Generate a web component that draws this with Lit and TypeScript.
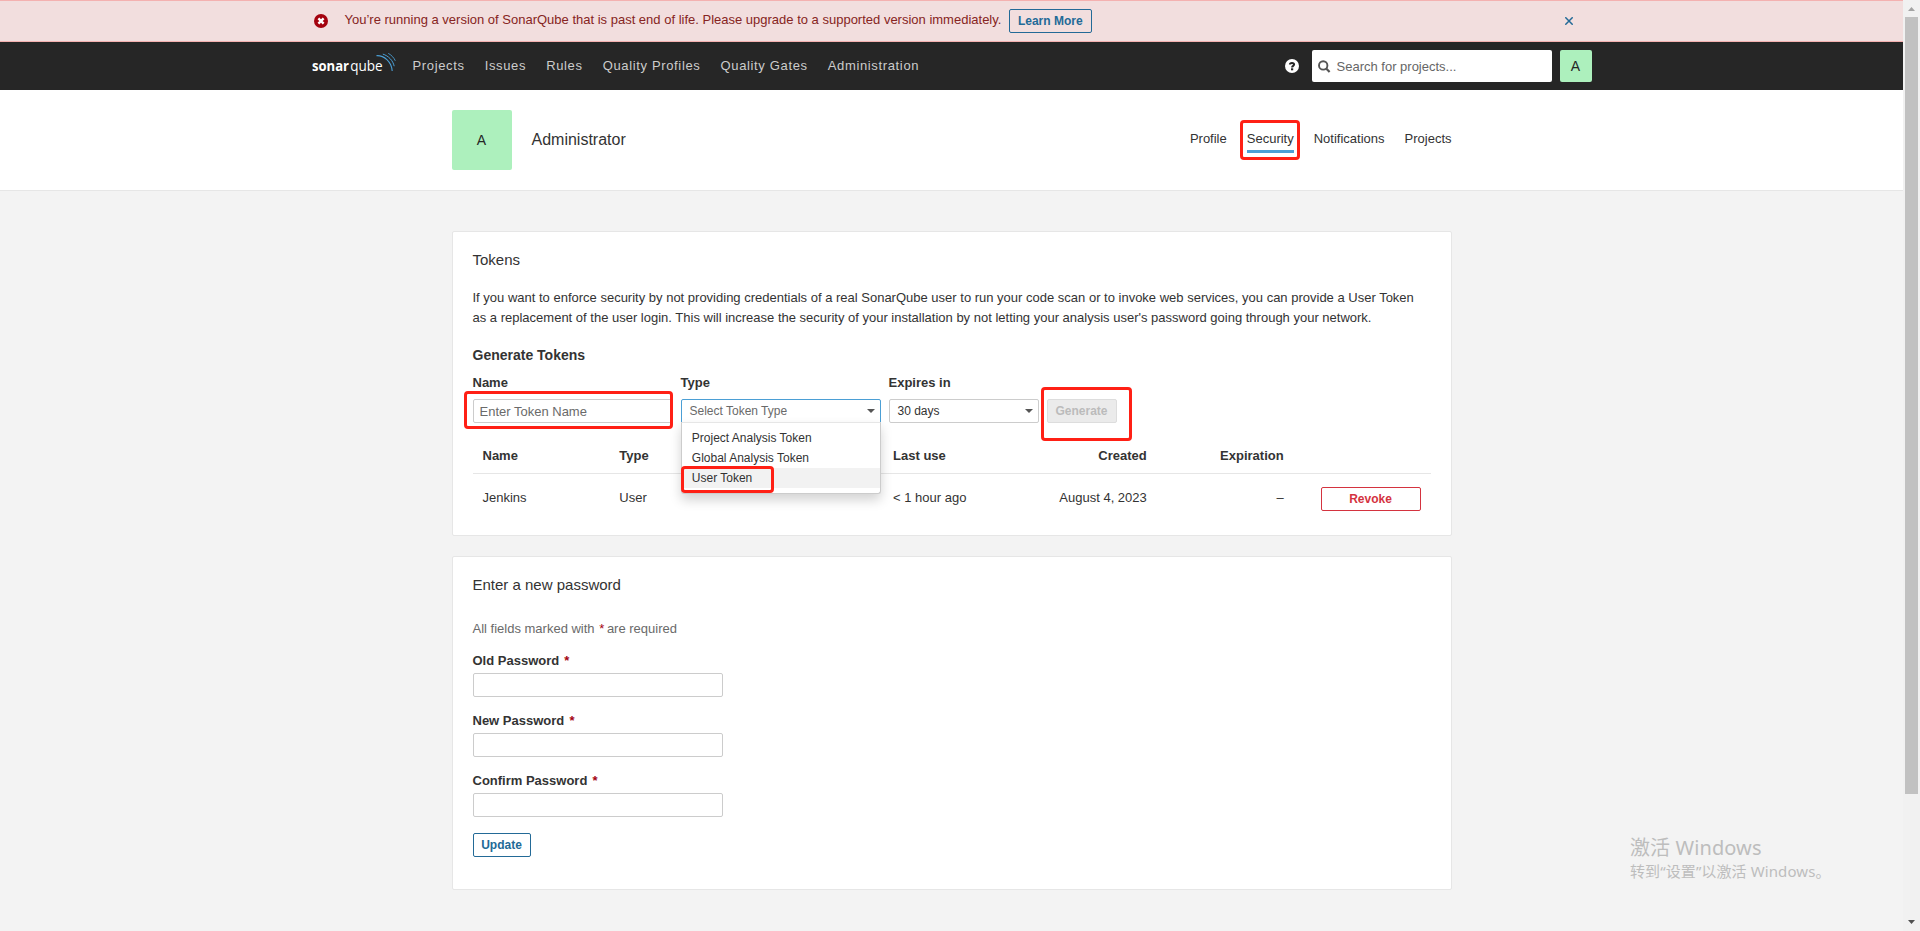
import { LitElement, html, css } from "lit";
import { customElement } from "lit/decorators.js";

@customElement("sq-banner")
export class SqBanner extends LitElement {
  static styles = css`
    :host { display: block; height: 40px; background: #f2dede; border: 1px solid #f4b1b0; border-width: 1px 0; color: #862422; }
    .inner { display: flex; width: 1280px; margin: 0 auto; height: 40px; }
    .icon { margin: 13px 0 0 2.5px; width: 14px; height: 14px; }
    .msg { margin-left: 16.5px; line-height: 38px; }
    .btn { margin: 8px 0 0 7.5px; height: 22px; line-height: 22px; padding: 0 8px; border: 1px solid #236a97; border-radius: 2px; color: #236a97; font-size: 12px; font-weight: 700; }
    .close { margin: 16px 18.5px 0 auto; width: 8px; height: 8px; }
    svg { display: block; }
  `;
  render() {
    return html`<div class="inner">
      <svg class="icon" viewBox="0 0 14 14"><circle cx="7" cy="7" r="7" fill="#a4030f" /><path d="M4.4 4.4l5.2 5.2M9.6 4.4l-5.2 5.2" stroke="#fff" stroke-width="2.4" /></svg>
      <span class="msg">You’re running a version of SonarQube that is past end of life. Please upgrade to a supported version immediately.</span>
      <span class="btn">Learn More</span>
      <svg class="close" viewBox="0 0 8 8"><path d="M.3 .3l7.4 7.4M7.7 .3l-7.4 7.4" stroke="#236a97" stroke-width="1.5" /></svg>
    </div>`;
  }
}

@customElement("sq-navbar")
export class SqNavbar extends LitElement {
  static styles = css`
    :host { display: block; height: 48px; background: #262626; }
    .inner { display: flex; width: 1280px; height: 48px; margin: 0 auto; }
    .logo { width: 84px; height: 24px; margin: 10px 17px 0 0; }
    .menu { display: flex; gap: 20px; line-height: 48px; color: #ccc; letter-spacing: 0.65px; }
    .help { width: 14px; height: 14px; margin: 17px 13px 0 auto; }
    .search { display: flex; box-sizing: border-box; width: 240px; height: 32px; margin: 8px 8px 0 0; padding-left: 6px; background: #fff; border-radius: 2px; color: #666; line-height: 34px; }
    .lens { width: 13px; height: 13px; margin: 10px 6px 0 0; }
    .avatar { width: 32px; height: 32px; margin-top: 8px; border-radius: 2px; background: #adf0bd; color: #262626; font-size: 14px; line-height: 32px; text-align: center; }
    .word { font: 400 15px "Open Sans", sans-serif; fill: #fff; }
    .bold { font-weight: 700; }
    svg { display: block; }
  `;
  render() {
    return html`<div class="inner">
      <svg class="logo" viewBox="0 0 84 24">
        <text class="word bold" x="0" y="19" textLength="37" lengthAdjust="spacingAndGlyphs">sonar</text>
        <text class="word" x="38.2" y="19" textLength="32.5" lengthAdjust="spacingAndGlyphs">qube</text>
        <g fill="none" stroke="#4b9fd5" stroke-width="1.1">
          <path d="M64.5 3.6C72 3.2 79.5 9.5 80.2 19" />
          <path d="M70.8 2.1C76.5 3.8 81 8.6 82.2 14.2" stroke-width="1" />
          <path d="M76.3 1.4C79.4 3 82 5.8 83.3 8.8" stroke-width=".9" />
        </g>
      </svg>
      <nav class="menu">${["Projects", "Issues", "Rules", "Quality Profiles", "Quality Gates", "Administration"].map((t) => html`<span>${t}</span>`)}</nav>
      <svg class="help" viewBox="0 0 14 14"><circle cx="7" cy="7" r="7" fill="#fff" /><path d="M4.9 5.6C4.9 3.3 9.1 3.3 9.1 5.6C9.1 6.9 7.1 6.9 7.1 8.4" fill="none" stroke="#262626" stroke-width="2" /><rect x="6" y="9.3" width="2.2" height="2" fill="#262626" /></svg>
      <div class="search">
        <svg class="lens" viewBox="0 0 13 13"><circle cx="5.2" cy="5.4" r="4.2" fill="none" stroke="#555" stroke-width="1.9" /><path d="M8.2 8.4L11.6 11.9" stroke="#555" stroke-width="2.2" /></svg>
        <span>Search for projects...</span>
      </div>
      <div class="avatar">A</div>
    </div>`;
  }
}

@customElement("sq-account-header")
export class SqAccountHeader extends LitElement {
  static styles = css`
    :host { display: block; height: 100px; background: #fff; border-bottom: 1px solid #e6e6e6; }
    .inner { display: flex; width: 1000px; height: 100px; margin: 0 auto; }
    .avatar { width: 60px; height: 60px; margin-top: 20px; border-radius: 2px; background: #adf0bd; color: #262626; font-size: 14px; line-height: 60px; text-align: center; }
    .name { margin: 41px 0 0 20px; font-size: 16px; line-height: 18px; }
    .tabs { display: flex; gap: 20px; margin: 39px 0 0 auto; line-height: 20px; }
    .tab { height: 21px; position: relative; }
    .active { border-bottom: 3px solid #4b9fd5; }
    .mark { position: absolute; left: -7px; top: -9px; width: 54px; height: 34px; border: 3px solid #ff2015; border-radius: 4px; }
  `;
  render() {
    return html`<div class="inner">
      <div class="avatar">A</div>
      <div class="name">Administrator</div>
      <nav class="tabs">
        <span class="tab">Profile</span>
        <span class="tab active">Security<i class="mark"></i></span>
        <span class="tab">Notifications</span>
        <span class="tab">Projects</span>
      </nav>
    </div>`;
  }
}

const caret = html`<svg class="caret" viewBox="0 0 8 4"><path d="M0 0h8L4 4z" fill="#555" /></svg>`;

@customElement("sq-tokens")
export class SqTokens extends LitElement {
  static styles = css`
    :host { display: block; box-sizing: border-box; height: 305px; padding: 20px; background: #fff; border: 1px solid #e6e6e6; border-radius: 2px; }
    h2 { margin: 0 0 20px; font-size: 15px; line-height: 16px; font-weight: 400; }
    p { margin: 0 -10px 19px 0; line-height: 20px; }
    h3 { margin: 0 0 12px; font-size: 14px; line-height: 16px; font-weight: 700; }
    .form { display: flex; align-items: flex-end; gap: 8px; }
    .field { display: flex; flex-direction: column; gap: 8px; width: 200px; }
    .field.short { width: 150px; }
    label { font-weight: 700; line-height: 16px; }
    .control { position: relative; box-sizing: border-box; display: flex; height: 24px; border: 1px solid #ccc; border-radius: 2px; font-size: 12px; line-height: 22px; padding: 0 5px 0 8px; justify-content: space-between; }
    .control.text { font-size: 13px; padding: 1px 5px 0 6px; color: #6a6a6a; }
    .control.open { border-color: #4b9fd5; border-radius: 2px 2px 0 0; color: #6a6a6a; }
    .caret { width: 8px; height: 4px; margin-top: 9px; }
    .generate { position: relative; box-sizing: border-box; height: 24px; width: 70px; text-align: center; line-height: 22px; font-size: 12px; font-weight: 700; color: #bbb; background: #ebebeb; border: 1px solid #ddd; border-radius: 2px; }
    .menu { position: absolute; z-index: 2; left: -1px; top: 22px; box-sizing: border-box; width: 200px; height: 72px; padding: 5px 0; background: #fff; border: 1px solid #ccc; border-top-color: #e6e6e6; border-radius: 0 0 3px 3px; color: #333; box-shadow: 0 6px 12px rgba(0, 0, 0, 0.175); }
    .opt { line-height: 20px; padding-left: 10.3px; }
    .opt.hover { position: relative; background: #f2f2f2; }
    .mark { position: absolute; box-sizing: border-box; border: 3px solid #ff2015; border-radius: 4px; z-index: 1; }
    .m-name { left: -10px; top: -9px; width: 209px; height: 38px; }
    .m-opt { left: -1px; top: -2px; width: 93px; height: 27px; }
    .m-gen { left: -7px; top: -13px; width: 91px; height: 54px; }
    .table { margin-top: 13px; }
    .row { display: grid; grid-template-columns: repeat(7, 1fr); line-height: 20px; }
    .row > * { padding: 0 10px; }
    .head { font-weight: 700; padding: 10px 0 7px; border-bottom: 1px solid #e6e6e6; }
    .body { padding-top: 13px; }
    .body > span { padding-top: 1px; }
    .r { text-align: right; }
    .revoke { width: 98px; height: 22px; border: 1px solid #d4333f; border-radius: 2px; color: #d4333f; font-size: 12px; font-weight: 700; line-height: 22px; text-align: center; margin-left: auto; }
  `;
  render() {
    return html`
      <h2>Tokens</h2>
      <p>If you want to enforce security by not providing credentials of a real SonarQube user to run your code scan or to invoke web services, you can provide a User Token<br />as a replacement of the user login. This will increase the security of your installation by not letting your analysis user's password going through your network.</p>
      <h3>Generate Tokens</h3>
      <div class="form">
        <div class="field"><label>Name</label><div class="control text">Enter Token Name<i class="mark m-name"></i></div></div>
        <div class="field"><label>Type</label>
          <div class="control open"><span>Select Token Type</span>${caret}
            <div class="menu">
              <div class="opt">Project Analysis Token</div>
              <div class="opt">Global Analysis Token</div>
              <div class="opt hover">User Token<i class="mark m-opt"></i></div>
            </div>
          </div>
        </div>
        <div class="field short"><label>Expires in</label><div class="control"><span>30 days</span>${caret}</div></div>
        <div class="generate">Generate<i class="mark m-gen"></i></div>
      </div>
      <div class="table">
        <div class="row head"><span>Name</span><span>Type</span><span></span><span>Last use</span><span class="r">Created</span><span class="r">Expiration</span><span></span></div>
        <div class="row body"><span>Jenkins</span><span>User</span><span></span><span>&lt; 1 hour ago</span><span class="r">August 4, 2023</span><span class="r">–</span><div><div class="revoke">Revoke</div></div></div>
      </div>`;
  }
}

@customElement("sq-password")
export class SqPassword extends LitElement {
  static styles = css`
    :host { display: block; box-sizing: border-box; height: 334px; margin-top: 20px; padding: 20px; background: #fff; border: 1px solid #e6e6e6; border-radius: 2px; }
    h2 { margin: 0 0 26px; font-size: 15px; line-height: 16px; font-weight: 400; }
    .note { margin: 0 0 14px; line-height: 20px; color: #6a6a6a; }
    .note em { margin: 0 -1px 0 1px; }
    label { display: block; font-weight: 700; line-height: 16px; margin-bottom: 4px; }
    em { font-style: normal; color: #a4030f; }
    label em { margin-left: 1.5px; }
    .input { box-sizing: border-box; width: 250px; height: 24px; border: 1px solid #ccc; border-radius: 2px; margin-bottom: 16px; }
    .btn { display: block; box-sizing: border-box; width: 58px; height: 24px; border: 1px solid #236a97; border-radius: 2px; color: #236a97; font-size: 12px; font-weight: 700; line-height: 22px; text-align: center; }
  `;
  render() {
    return html`
      <h2>Enter a new password</h2>
      <div class="note">All fields marked with <em>*</em> are required</div>
      ${["Old Password", "New Password", "Confirm Password"].map((t) => html`<label>${t} <em>*</em></label><div class="input"></div>`)}
      <div class="btn">Update</div>`;
  }
}

@customElement("app-root")
export class AppRoot extends LitElement {
  static styles = css`
    :host { display: flex; position: relative; width: 1920px; height: 931px; overflow: hidden; background: #f3f3f3; color: #333; font: 13px "Liberation Sans", Arial, sans-serif; }
    .page { width: 1903px; }
    .content { width: 1000px; margin: 40px auto 0; }
    .scroll { display: flex; flex-direction: column; align-items: center; justify-content: space-between; width: 17px; height: 931px; background: #f1f1f1; }
    .scroll svg { display: block; width: 17px; height: 17px; flex: none; }
    .thumb { width: 13px; height: 777px; background: #c1c1c1; margin-bottom: 120px; }
    .wm { position: absolute; left: 1630px; top: 833px; color: #bdbdbd; font-family: "Noto Sans", "Noto Sans CJK SC", sans-serif; white-space: nowrap; }
    .wm .a { font-size: 20px; line-height: 30px; letter-spacing: 0.1px; }
    .wm .b { font-size: 15px; line-height: 20px; margin-top: -2px; letter-spacing: 0.1px; }
  `;
  render() {
    return html`
      <div class="page">
        <sq-banner></sq-banner>
        <sq-navbar></sq-navbar>
        <sq-account-header></sq-account-header>
        <div class="content">
          <sq-tokens></sq-tokens>
          <sq-password></sq-password>
        </div>
      </div>
      <div class="scroll">
        <svg viewBox="0 0 17 17"><path d="M5 11h7L8.5 7z" fill="#a3a3a3" /></svg>
        <div class="thumb"></div>
        <svg viewBox="0 0 17 17"><path d="M5 6h7L8.5 10z" fill="#505050" /></svg>
      </div>
      <div class="wm">
        <div class="a">激活&nbsp;Windows</div>
        <div class="b">转到“设置”以激活&nbsp;Windows。</div>
      </div>`;
  }
}
